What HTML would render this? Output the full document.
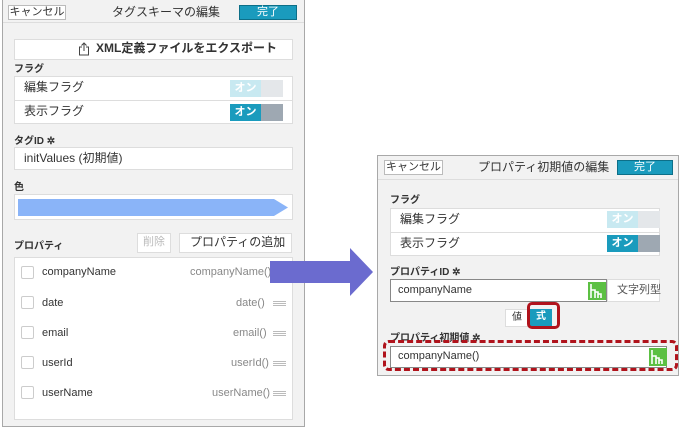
<!DOCTYPE html><html><head><meta charset="utf-8"><style>
*{box-sizing:border-box;margin:0;padding:0}
body{width:682px;height:435px;background:#fff;position:relative;overflow:hidden;font-family:"Liberation Sans","Noto Sans CJK JP",sans-serif;color:#333;line-height:1.2}
.a{position:absolute}
.panel{background:#f2f2f2;border:1px solid #a8a8a8}
.w{background:#fff;border:1px solid #ddd}
.btn{background:#fff;border:1px solid #bbb;font-size:11px;text-align:center;line-height:13px;white-space:nowrap}
.done{background:#1a9bbd;border:1px solid #0d6f88;color:#fff;font-size:11px;text-align:center;line-height:13px}
.t{font-size:11px;white-space:nowrap;line-height:1.45}
.lbl{font-size:10px;font-weight:bold;color:#333;white-space:nowrap;line-height:1.45}
.tog{width:53px;height:17px}
.tog .on{position:absolute;left:0;top:0;width:31px;height:17px;color:#fff;font-size:11px;font-weight:bold;text-align:center;line-height:16px}
.tog .off{position:absolute;left:31px;top:0;width:22px;height:17px}
.cb{width:13px;height:13px;border:1px solid #ccc;border-radius:2px;background:#fff}
.g{color:#888}
.drag{width:13px;height:5px;border-top:1px solid #bbb;border-bottom:1px solid #bbb}
.drag:after{content:"";position:absolute;left:0;top:1px;width:13px;border-top:1px solid #bbb}
.gi{width:18px;height:18px;background:#5cc043}
</style></head><body>
<div class="a panel" style="left:2px;top:-1px;width:303px;height:428px"></div>
<div class="a" style="left:3px;top:22px;width:301px;border-top:1px solid #ddd"></div>
<div class="a btn" style="left:8px;top:5px;width:58px;height:15px">キャンセル</div>
<div class="a t" style="left:112px;top:4px;font-size:12px">タグスキーマの編集</div>
<div class="a done" style="left:239px;top:5px;width:58px;height:15px">完了</div>
<div class="a w" style="left:14px;top:39px;width:279px;height:21px"></div>
<svg class="a" style="left:78px;top:42px" width="12" height="14" viewBox="0 0 12 14"><path d="M4 5H1.5V13H10.5V5H8M6 9V1M3.5 3.5L6 1L8.5 3.5" fill="none" stroke="#444" stroke-width="1"/></svg>
<div class="a t" style="left:96px;top:40px;font-size:12px;font-weight:bold">XML定義ファイルをエクスポート</div>
<div class="a lbl" style="left:14px;top:63px">フラグ</div>
<div class="a w" style="left:14px;top:76px;width:279px;height:48px"></div>
<div class="a" style="left:15px;top:100px;width:277px;border-top:1px solid #ddd"></div>
<div class="a t" style="left:24px;top:79px;font-size:12px">編集フラグ</div>
<div class="a t" style="left:24px;top:103px;font-size:12px">表示フラグ</div>
<div class="a tog" style="left:230px;top:80px"><div class="on" style="background:#c8e9f1">オン</div><div class="off" style="background:#e4e7ea"></div></div>
<div class="a tog" style="left:230px;top:104px"><div class="on" style="background:#1a9bbd">オン</div><div class="off" style="background:#9ea8b2"></div></div>
<div class="a lbl" style="left:14px;top:135px">タグID ✲</div>
<div class="a w" style="left:14px;top:147px;width:279px;height:23px"></div>
<div class="a t" style="left:24px;top:150px;font-size:12px">initValues (初期値)</div>
<div class="a lbl" style="left:14px;top:181px">色</div>
<div class="a w" style="left:14px;top:194px;width:279px;height:26px"></div>
<svg class="a" style="left:18px;top:199px" width="270" height="17"><path d="M0 0H256L270 8.5L256 17H0Z" fill="#8ab4f8"/></svg>
<div class="a lbl" style="left:14px;top:240px">プロパティ</div>
<div class="a btn" style="left:137px;top:233px;width:34px;height:20px;line-height:17px;color:#bbb;border-color:#ddd">削除</div>
<div class="a btn" style="left:179px;top:233px;width:113px;height:20px;line-height:17px;font-size:12px;border-color:#ddd;text-align:left;padding-left:10px">プロパティの追加</div>
<svg class="a" style="left:274px;top:238px" width="8" height="10"><path d="M2 1L6 5L2 9" fill="none" stroke="#999" stroke-width="1.3"/></svg>
<div class="a w" style="left:14px;top:257px;width:279px;height:163px"></div>
<div class="a cb" style="left:21px;top:266px"></div><div class="a t" style="left:42px;top:265px">companyName</div><div class="a t g" style="left:190px;top:265px">companyName()</div>
<div class="a cb" style="left:21px;top:296px"></div><div class="a t" style="left:42px;top:296px">date</div><div class="a t g" style="left:236px;top:296px">date()</div><div class="a drag" style="left:273px;top:301px"></div>
<div class="a cb" style="left:21px;top:326px"></div><div class="a t" style="left:42px;top:326px">email</div><div class="a t g" style="left:233px;top:326px">email()</div><div class="a drag" style="left:273px;top:331px"></div>
<div class="a cb" style="left:21px;top:356px"></div><div class="a t" style="left:42px;top:356px">userId</div><div class="a t g" style="left:231px;top:356px">userId()</div><div class="a drag" style="left:273px;top:361px"></div>
<div class="a cb" style="left:21px;top:386px"></div><div class="a t" style="left:42px;top:386px">userName</div><div class="a t g" style="left:212px;top:386px">userName()</div><div class="a drag" style="left:273px;top:391px"></div>
<svg class="a" style="left:270px;top:246px" width="104" height="52"><path d="M0 15H80V2L103 26L80 50V37H0Z" fill="#6b6bcf"/></svg>
<div class="a panel" style="left:377px;top:155px;width:302px;height:221px"></div>
<div class="a" style="left:378px;top:179px;width:300px;border-top:1px solid #ddd"></div>
<div class="a btn" style="left:384px;top:160px;width:59px;height:15px">キャンセル</div>
<div class="a t" style="left:478px;top:159px;font-size:12px">プロパティ初期値の編集</div>
<div class="a done" style="left:617px;top:160px;width:56px;height:15px">完了</div>
<div class="a lbl" style="left:390px;top:194px">フラグ</div>
<div class="a w" style="left:390px;top:208px;width:270px;height:48px"></div>
<div class="a" style="left:391px;top:232px;width:268px;border-top:1px solid #ddd"></div>
<div class="a t" style="left:400px;top:211px;font-size:12px">編集フラグ</div>
<div class="a t" style="left:400px;top:235px;font-size:12px">表示フラグ</div>
<div class="a tog" style="left:607px;top:211px"><div class="on" style="background:#c8e9f1">オン</div><div class="off" style="background:#e4e7ea"></div></div>
<div class="a tog" style="left:607px;top:235px"><div class="on" style="background:#1a9bbd">オン</div><div class="off" style="background:#9ea8b2"></div></div>
<div class="a lbl" style="left:390px;top:266px">プロパティID ✲</div>
<div class="a" style="left:390px;top:279px;width:217px;height:23px;background:#fff;border:1px solid #888"></div>
<div class="a t" style="left:398px;top:283px">companyName</div>
<svg class="a gi" style="left:588px;top:282px" viewBox="0 0 18 18"><path d="M3 2V16M3 8H7V16M7 10H10V16M10 12H13V16" fill="none" stroke="#fff" stroke-width="1.6"/></svg>
<div class="a w" style="left:607px;top:279px;width:53px;height:23px"></div>
<div class="a t" style="left:617px;top:283px;color:#555">文字列型</div>
<div class="a btn" style="left:505px;top:309px;width:24px;height:18px;line-height:15px;font-size:10px;border-color:#ddd">値</div>
<div class="a" style="left:530px;top:309px;width:22px;height:18px;background:#1a9bbd;color:#fff;font-size:10px;text-align:center;line-height:16px;font-weight:bold">式</div>
<div class="a" style="left:527px;top:302px;width:33px;height:27px;border:3px solid #b0131c;border-radius:5px"></div>
<div class="a lbl" style="left:390px;top:332px">プロパティ初期値 ✲</div>
<div class="a" style="left:390px;top:346px;width:277px;height:22px;background:#fff;border:1px solid #888"></div>
<div class="a t" style="left:398px;top:349px">companyName()</div>
<svg class="a gi" style="left:649px;top:348px" viewBox="0 0 18 18"><path d="M3 2V16M3 8H7V16M7 10H10V16M10 12H13V16" fill="none" stroke="#fff" stroke-width="1.6"/></svg>
<div class="a" style="left:383px;top:340px;width:295px;height:31px;border:3px dashed #b0131c;border-radius:6px"></div>
</body></html>
